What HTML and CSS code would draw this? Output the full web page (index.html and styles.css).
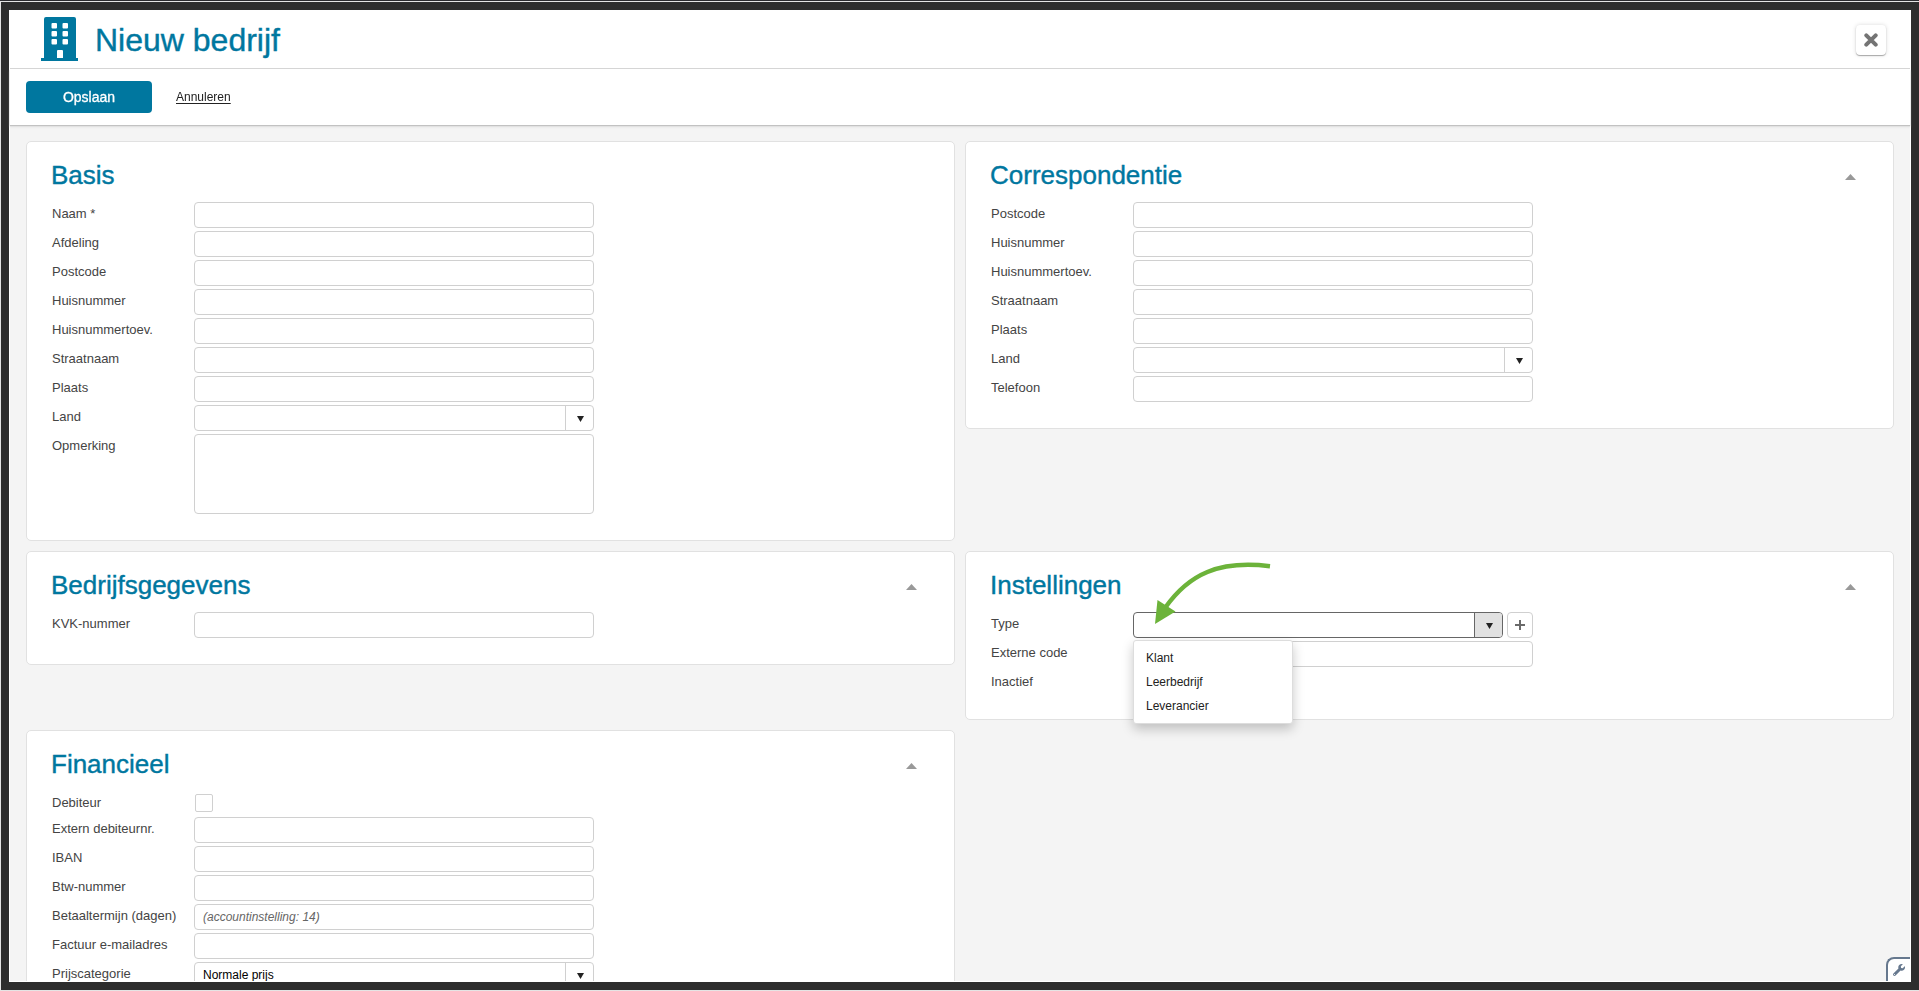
FILE: index.html
```html
<!DOCTYPE html>
<html lang="nl">
<head>
<meta charset="utf-8">
<title>Nieuw bedrijf</title>
<link rel="stylesheet" href="styles.css">
</head>
<body>
<div class="app">
  <header class="header">
    <svg class="logo" viewBox="0 0 38 44" aria-hidden="true">
      <path fill="#00779f" fill-rule="evenodd" d="M5 0H33Q35 0 35 2V41H37V44H0V41H3V2Q3 0 5 0ZM11.500 6Q10.500 6 10.500 7V10.500Q10.500 11.500 11.500 11.500H15Q16 11.500 16 10.500V7Q16 6 15 6ZM22.500 6Q21.500 6 21.500 7V10.500Q21.500 11.500 22.500 11.500H26Q27 11.500 27 10.500V7Q27 6 26 6ZM11.500 14Q10.500 14 10.500 15V18.500Q10.500 19.500 11.500 19.500H15Q16 19.500 16 18.500V15Q16 14 15 14ZM22.500 14Q21.500 14 21.500 15V18.500Q21.500 19.500 22.500 19.500H26Q27 19.500 27 18.500V15Q27 14 26 14ZM11.500 22Q10.500 22 10.500 23V26.500Q10.500 27.500 11.500 27.500H15Q16 27.500 16 26.500V23Q16 22 15 22ZM22.500 22Q21.500 22 21.500 23V26.500Q21.500 27.500 22.500 27.500H26Q27 27.500 27 26.500V23Q27 22 26 22ZM17 33Q16 33 16 34V41H22V34Q22 33 21 33Z"/>
    </svg>
    <h1 class="title">Nieuw bedrijf</h1>
    <button class="close" type="button" aria-label="Sluiten">
      <svg width="14" height="14" viewBox="0 0 14 14"><path d="M2.300 2.300L11.700 11.700M11.700 2.300L2.300 11.700" stroke="#747474" stroke-width="4" stroke-linecap="round"/></svg>
    </button>
  </header>
  <div class="toolbar">
    <button class="save" type="submit" form="company">Opslaan</button>
    <a class="cancel" href="#">Annuleren</a>
  </div>
  <main class="content">
    <form class="grid" id="company">
      <section class="card">
        <div class="card-head"><h2>Basis</h2></div>
        <div class="rows">
          <div class="row"><label for="b1">Naam *</label><input class="field" id="b1" type="text"></div>
          <div class="row"><label for="b2">Afdeling</label><input class="field" id="b2" type="text"></div>
          <div class="row"><label for="b3">Postcode</label><input class="field" id="b3" type="text"></div>
          <div class="row"><label for="b4">Huisnummer</label><input class="field" id="b4" type="text"></div>
          <div class="row"><label for="b5">Huisnummertoev.</label><input class="field" id="b5" type="text"></div>
          <div class="row"><label for="b6">Straatnaam</label><input class="field" id="b6" type="text"></div>
          <div class="row"><label for="b7">Plaats</label><input class="field" id="b7" type="text"></div>
          <div class="row"><label for="b8">Land</label><div class="combo"><select class="field" id="b8"><option></option></select></div></div>
          <div class="row"><label for="b9">Opmerking</label><textarea class="field area" id="b9"></textarea></div>
        </div>
      </section>

      <section class="card">
        <div class="card-head"><h2>Correspondentie</h2><button class="fold" type="button" aria-label="Inklappen"></button></div>
        <div class="rows">
          <div class="row"><label for="c1">Postcode</label><input class="field" id="c1" type="text"></div>
          <div class="row"><label for="c2">Huisnummer</label><input class="field" id="c2" type="text"></div>
          <div class="row"><label for="c3">Huisnummertoev.</label><input class="field" id="c3" type="text"></div>
          <div class="row"><label for="c4">Straatnaam</label><input class="field" id="c4" type="text"></div>
          <div class="row"><label for="c5">Plaats</label><input class="field" id="c5" type="text"></div>
          <div class="row"><label for="c6">Land</label><div class="combo"><select class="field" id="c6"><option></option></select></div></div>
          <div class="row"><label for="c7">Telefoon</label><input class="field" id="c7" type="text"></div>
        </div>
      </section>

      <section class="card">
        <div class="card-head"><h2>Bedrijfsgegevens</h2><button class="fold" type="button" aria-label="Inklappen"></button></div>
        <div class="rows">
          <div class="row"><label for="k1">KVK-nummer</label><input class="field" id="k1" type="text"></div>
        </div>
      </section>

      <section class="card">
        <div class="card-head"><h2>Instellingen</h2><button class="fold" type="button" aria-label="Inklappen"></button></div>
        <div class="rows">
          <div class="row">
            <label for="i1">Type</label>
            <div class="type-group">
              <div class="combo open"><select class="field" id="i1"><option></option></select></div>
              <button class="add" type="button" aria-label="Toevoegen"><svg width="12" height="12" viewBox="0 0 12 12"><path d="M6 1V11M1 6H11" stroke="#6a6a6a" stroke-width="2"/></svg></button>
              <ul class="menu" role="listbox" aria-label="Type">
                <li role="option">Klant</li>
                <li role="option">Leerbedrijf</li>
                <li role="option">Leverancier</li>
              </ul>
              <svg class="pointer" width="120" height="66" viewBox="0 0 120 66" aria-hidden="true">
                <path d="M12 49C36 15 66 1 117 7.300" fill="none" stroke="#6cb33a" stroke-width="4.500"/>
                <path d="M2 65L4.500 41L22.500 52.500Z" fill="#6cb33a"/>
              </svg>
            </div>
          </div>
          <div class="row"><label for="i2">Externe code</label><input class="field" id="i2" type="text"></div>
          <div class="row"><label for="i3">Inactief</label><input class="check" id="i3" type="checkbox"></div>
        </div>
      </section>

      <section class="card">
        <div class="card-head"><h2>Financieel</h2><button class="fold" type="button" aria-label="Inklappen"></button></div>
        <div class="rows">
          <div class="row"><label for="f1">Debiteur</label><input class="check" id="f1" type="checkbox"></div>
          <div class="row"><label for="f2">Extern debiteurnr.</label><input class="field" id="f2" type="text"></div>
          <div class="row"><label for="f3">IBAN</label><input class="field" id="f3" type="text"></div>
          <div class="row"><label for="f4">Btw-nummer</label><input class="field" id="f4" type="text"></div>
          <div class="row"><label for="f5">Betaaltermijn (dagen)</label><input class="field" id="f5" type="text" placeholder="(accountinstelling: 14)"></div>
          <div class="row"><label for="f6">Factuur e-mailadres</label><input class="field" id="f6" type="text"></div>
          <div class="row"><label for="f7">Prijscategorie</label><div class="combo"><select class="field" id="f7"><option>Normale prijs</option></select></div></div>
        </div>
      </section>
    </form>
  </main>
  <button class="tools" type="button" aria-label="Instellingen">
    <svg width="12" height="12" viewBox="0 0 512 512"><path fill="#66788e" d="M507.700 109.100c-2.200-9-13.500-12.100-20.100-5.500l-74.400 74.400-67.900-11.300L334 98.900l74.400-74.400c6.600-6.600 3.400-17.900-5.700-20.200-47.400-11.700-99.600.9-136.600 37.900-39.600 39.600-50.500 97.100-34.100 147.200L18.700 402.800c-25 25-25 65.500 0 90.500s65.500 25 90.500 0l213.200-213.200c50.100 16.700 107.500 5.700 147.400-34.200 37.100-37.100 49.700-89.300 37.900-136.800zM64 472c-13.200 0-24-10.800-24-24s10.700-24 24-24 24 10.700 24 24-10.700 24-24 24z"/></svg>
  </button>
</div>
</body>
</html>
```

FILE: styles.css
```css
* {
  box-sizing: border-box;
}

body {
  display: flex;
  height: 100vh;
  margin: 0;
  padding: 1px 0 1px 1px;
  border-top: 1px solid #2b2b2f;
  background: #e4e4e4;
  color: #444;
  font-family: "Liberation Sans", Arial, sans-serif;
  font-size: 13px;
  overflow: hidden;
}

button, input, select, textarea {
  margin: 0;
  font-family: inherit;
}

h1, h2 {
  margin: 0;
  color: #00779f;
  font-weight: 400;
  -webkit-text-stroke: 0.4px #00779f;
}

.app {
  position: relative;
  display: flex;
  flex: 1;
  flex-direction: column;
  min-width: 0;
  padding: 0 1px 1px;
  border: 8px solid #2d2d2d;
  background: #fff;
}

.header {
  display: flex;
  flex: none;
  align-items: center;
  gap: 16px;
  height: 59px;
  padding: 0 24px 0 31px;
  border-bottom: 1px solid #d5d5d5;
}

.logo {
  width: 38px;
  height: 44px;
}

.title {
  flex: 1;
  padding-top: 2px;
  font-size: 32px;
  line-height: 40px;
}

.close {
  display: grid;
  place-items: center;
  width: 30px;
  height: 30px;
  margin-top: 2px;
  padding: 0;
  border: 0;
  border-radius: 4px;
  background: #fff;
  box-shadow: 0 1px 1px rgba(0, 0, 0, .3), 0 0 4px rgba(0, 0, 0, .15);
}

.toolbar {
  position: relative;
  z-index: 1;
  display: flex;
  flex: none;
  align-items: center;
  gap: 24px;
  padding: 12px 16px;
  background: #fff;
  box-shadow: 0 1px 1px #c2c2c2, 0 2px 2px #e2e2e2;
}

.save {
  width: 126px;
  height: 32px;
  padding: 0;
  border: 0;
  border-radius: 4px;
  background: #00779f;
  color: #fff;
  font-size: 14px;
  -webkit-text-stroke: 0.3px #fff;
}

.cancel {
  color: #222;
  font-size: 12px;
  text-underline-offset: 2px;
}

.content {
  flex: 1;
  min-height: 0;
  padding: 16px;
  background: #f4f4f4;
  overflow-y: auto;
  scrollbar-width: none;
}

.grid {
  display: grid;
  grid-template-columns: 1fr 1fr;
  align-items: start;
  gap: 10px;
}

.card {
  padding: 18px 25px 26px;
  border: 1px solid #e1e1e1;
  border-radius: 5px;
  background: #fff;
}

.card-head {
  display: flex;
  align-items: center;
  justify-content: space-between;
  margin: 0 0 12px -1px;
  padding-right: 12px;
}

.card-head h2 {
  font-size: 26px;
  line-height: 30px;
}

.fold {
  width: 11px;
  height: 6px;
  margin-top: 4px;
  padding: 0;
  border: 0;
  background: #999;
  clip-path: polygon(50% 0, 100% 100%, 0 100%);
}

.rows {
  display: flex;
  flex-direction: column;
  gap: 3px;
}

.row {
  display: grid;
  grid-template-columns: 142px minmax(0, 400px);
  align-items: start;
}

.row label {
  line-height: 23px;
}

.field {
  display: block;
  width: 100%;
  height: 26px;
  padding: 0 8px;
  border: 1px solid #d0d0d0;
  border-radius: 4px;
  outline: 0;
  background: #fff;
  color: #000;
  font-size: 12px;
  appearance: none;
}

.field::placeholder {
  color: #666;
  font-style: italic;
}

.area {
  height: 80px;
  padding: 5px 8px;
  resize: none;
}

.combo {
  position: relative;
  flex: 1;
}

.combo::before {
  content: "";
  position: absolute;
  inset: 1px 1px 1px auto;
  width: 27px;
  border-left: 1px solid #d0d0d0;
  border-radius: 0 3px 3px 0;
  pointer-events: none;
}

.combo::after {
  content: "";
  position: absolute;
  top: 11px;
  right: 10px;
  width: 7px;
  height: 6px;
  background: #222;
  clip-path: polygon(0 0, 100% 0, 50% 100%);
  pointer-events: none;
}

.open .field {
  border-color: #666;
}

.open::before {
  border-color: #666;
  background: #e1e1e1;
}

.type-group {
  position: relative;
  display: flex;
  gap: 4px;
}

.add {
  display: grid;
  place-items: center;
  width: 26px;
  height: 26px;
  padding: 0;
  border: 1px solid #d0d0d0;
  border-radius: 4px;
  background: #fff;
}

.menu {
  position: absolute;
  z-index: 2;
  top: 28px;
  left: 0;
  width: 160px;
  margin: 0;
  padding: 5px 0;
  border: 1px solid #ddd;
  border-radius: 3px;
  background: #fff;
  box-shadow: 0 5px 12px rgba(0, 0, 0, .22);
  color: #222;
  font-size: 12px;
  line-height: 24px;
  list-style: none;
}

.menu li {
  padding: 0 12px;
}

.pointer {
  position: absolute;
  z-index: 3;
  top: -53px;
  left: 20px;
}

.check {
  width: 18px;
  height: 18px;
  margin: 3px 1px 2px;
  border: 1px solid #d0d0d0;
  border-radius: 2px;
  background: #fff;
  appearance: none;
}

.tools {
  position: absolute;
  z-index: 4;
  right: 1px;
  bottom: 1px;
  display: grid;
  place-items: center;
  width: 24px;
  height: 24px;
  padding: 0;
  border: solid #66788e;
  border-width: 2px 0 0 2px;
  border-radius: 8px 0 0;
  background: #fff;
}
```
